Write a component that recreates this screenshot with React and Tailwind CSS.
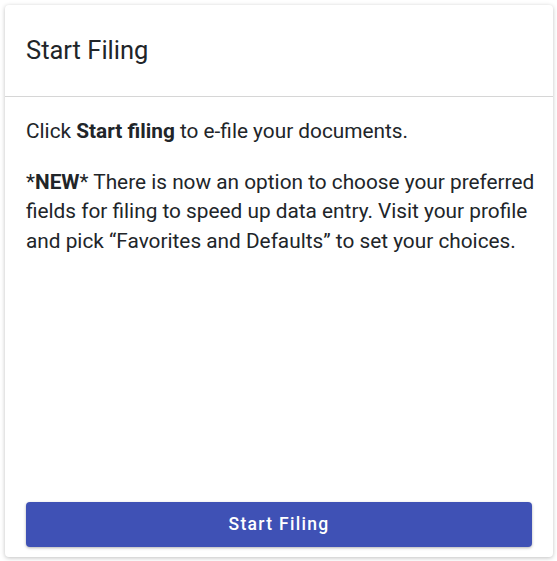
import React from "react";

function StartFilingCard() {
  return (
    <div className="flex h-[552px] w-[548px] flex-col rounded-[4px] bg-white shadow-[0_1px_4px_rgba(0,0,0,0.25)]">
      <div className="border-b border-[#d6d6d6] px-[21px] pt-[29px] pb-[30px]">
        <h2 className="text-[25.5px] leading-[32px] font-normal text-[#212529]">Start Filing</h2>
      </div>

      <div className="flex-1 pl-[21px] pr-[12px] pt-[20px] text-[20.8px] leading-[29.5px] text-[#212529]">
        <p className="mb-[21px]">
          Click <strong className="font-bold">Start filing</strong> to e-file your documents.
        </p>
        <p>
          *<strong className="font-bold">NEW</strong>* There is now an option to choose your preferred
          fields for filing to speed up data entry. Visit your profile and pick “Favorites and
          Defaults” to set your choices.
        </p>
      </div>

      <div className="px-[21px] pb-[10px]">
        <button
          type="button"
          className="flex h-[45px] w-full items-center justify-center rounded-[4px] bg-[#3f51b5] text-[17.5px] font-medium tracking-[1.3px] text-white shadow-[0_1px_3px_rgba(0,0,0,0.3)]"
        >
          Start Filing
        </button>
      </div>
    </div>
  );
}

export default function App() {
  return (
    <div className="min-h-[561px] bg-white p-[5px] font-['Roboto',sans-serif]">
      <StartFilingCard />
    </div>
  );
}
